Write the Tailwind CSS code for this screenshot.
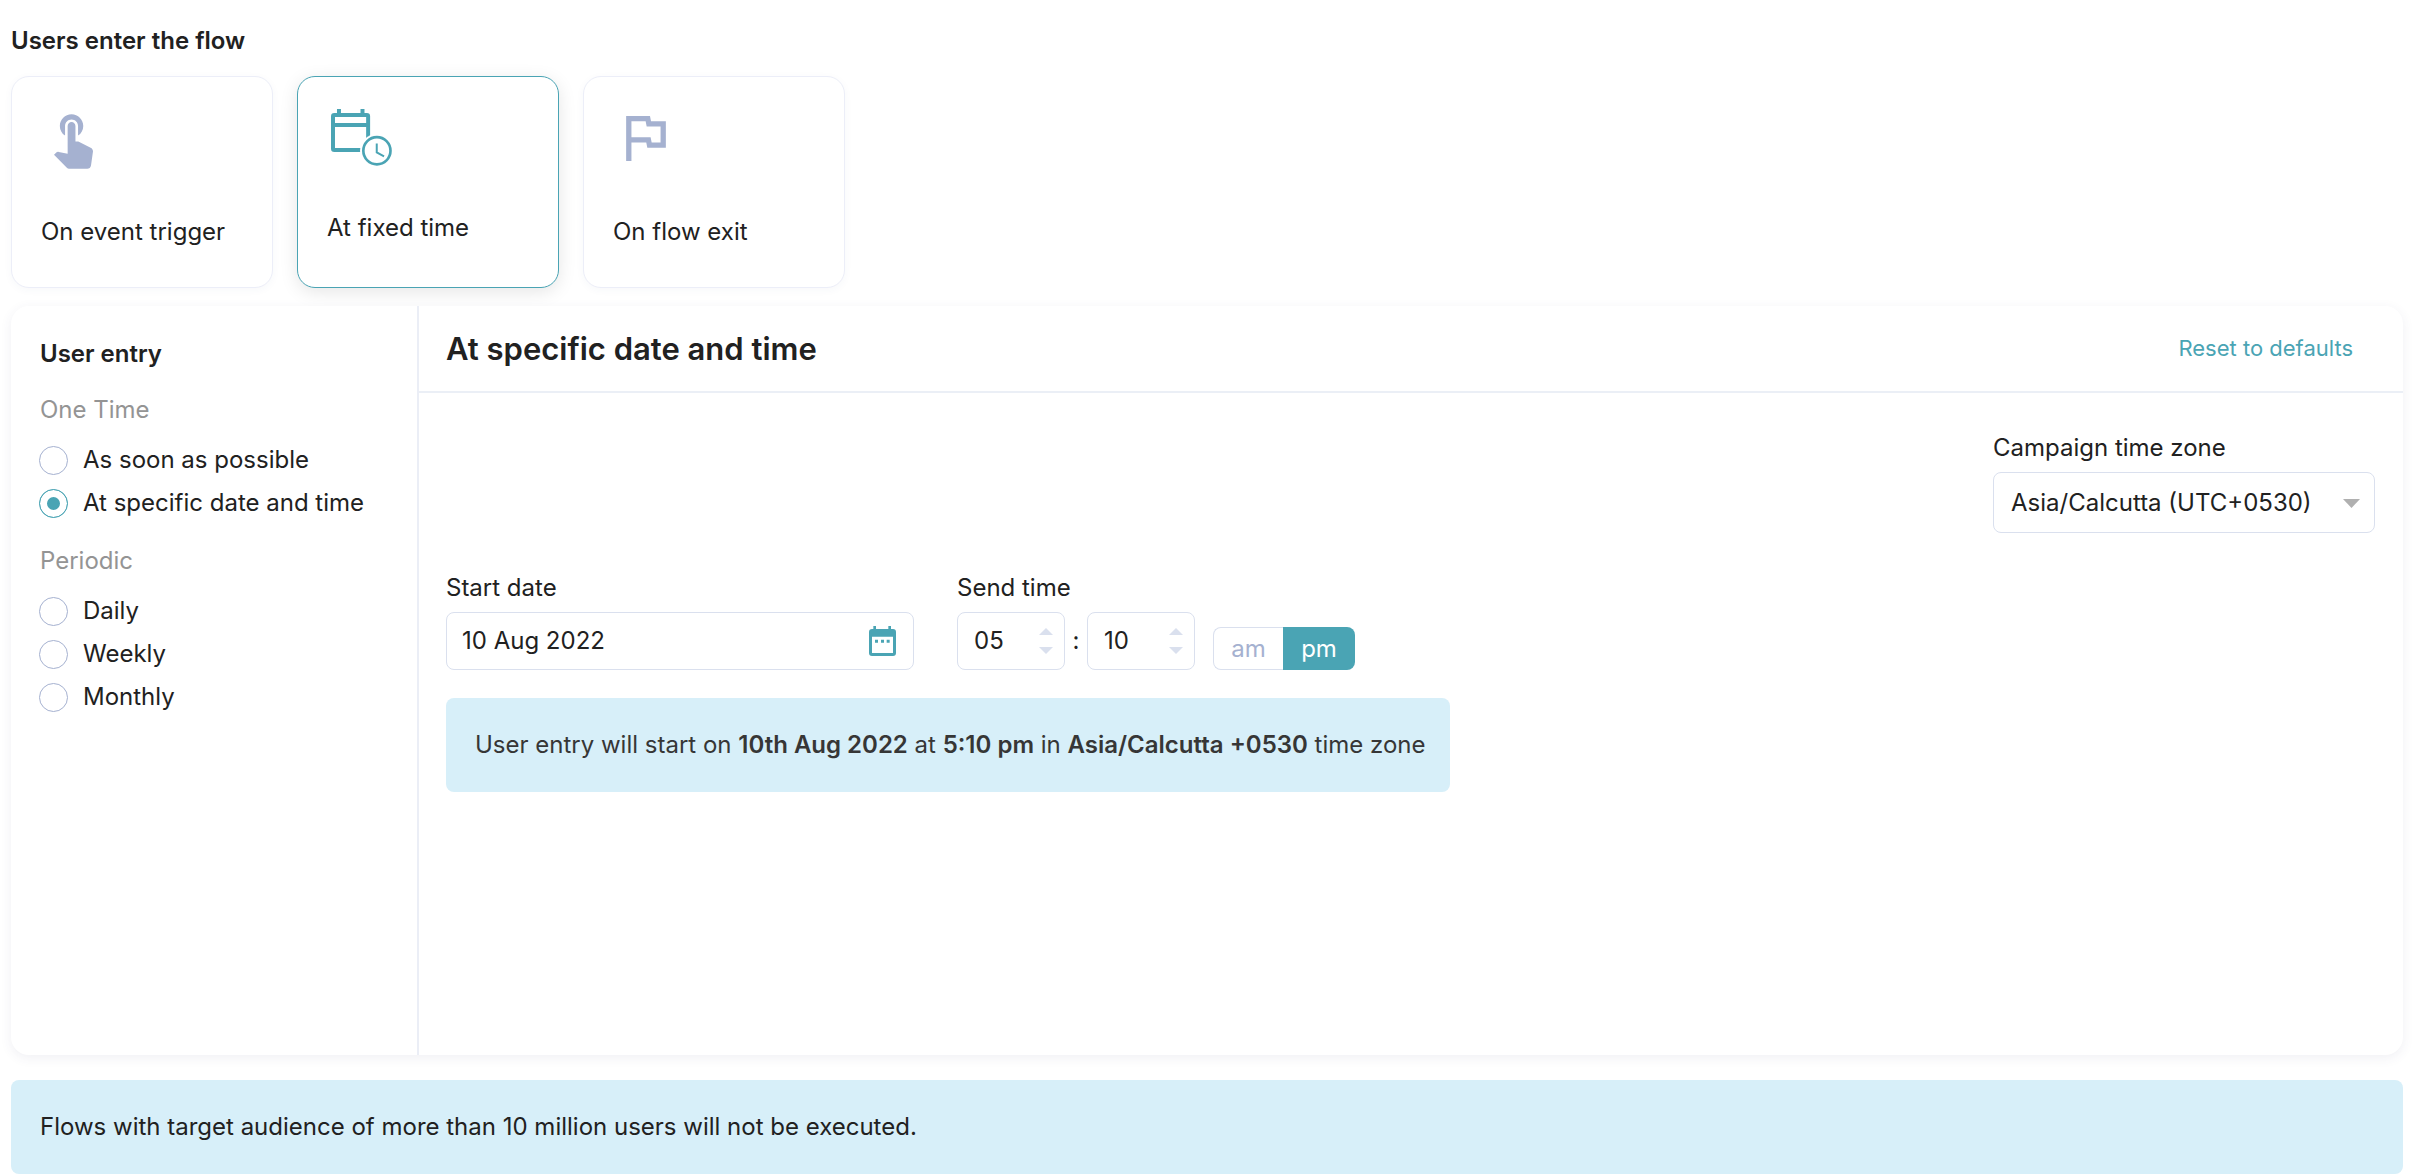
<!DOCTYPE html>
<html lang="en">
<head>
<meta charset="utf-8">
<meta name="viewport" content="width=device-width, initial-scale=1">
<title>Flow entry settings</title>
<script src="https://cdn.jsdelivr.net/npm/@tailwindcss/browser@4"></script>
</head>
<body class="bg-white font-['Inter',sans-serif] text-2xl text-[#212121]">
<main class="flex flex-col pl-[11px] pr-7 pt-[25px]">

  <h1 class="font-semibold">Users enter the flow</h1>

  <!-- Entry type -->
  <div class="mt-[19px] flex flex-wrap gap-6">
    <button type="button" class="flex h-[212px] w-[262px] flex-col justify-between rounded-[18px] border border-[#eceef8] bg-white pt-[37px] pb-[39px] pl-[29px] text-left shadow-[0_2px_8px_rgba(60,70,120,0.04)]">
      <svg class="ml-[13px] h-[55px] w-[39px]" viewBox="4.75 3 15 21" fill="#a5b1d0" aria-hidden="true"><path d="M9 11.24V7.5C9 6.12 10.12 5 11.5 5S14 6.12 14 7.5v3.74c1.21-.81 2-2.18 2-3.74C16 5.01 13.99 3 11.5 3S7 5.01 7 7.5c0 1.56.79 2.93 2 3.74zm9.84 4.63l-4.54-2.26c-.17-.07-.35-.11-.54-.11H13v-6c0-.83-.67-1.5-1.5-1.5S10 6.67 10 7.5v10.74l-3.43-.72c-.08-.01-.15-.03-.24-.03-.31 0-.59.13-.79.33l-.79.8 4.94 4.94c.27.27.65.44 1.06.44h6.79c.75 0 1.33-.55 1.44-1.28l.75-5.27c.01-.07.02-.14.02-.2 0-.62-.38-1.16-.91-1.38z"/></svg>
      <span>On event trigger</span>
    </button>
    <button type="button" aria-pressed="true" class="flex h-[212px] w-[262px] flex-col justify-between rounded-[18px] border border-[#4aa4b4] bg-white pt-8 pb-[43px] pl-[29px] text-left shadow-[0_4px_18px_rgba(0,0,0,0.10)]">
      <svg class="ml-1 h-[57px] w-[61px]" viewBox="993 327 184 172" fill="none" stroke="#4aa4b4" aria-hidden="true">
        <path fill="#4aa4b4" stroke="none" d="M1011 327h12v14h-12zM1082 327h12v14h-12z"/>
        <rect x="999" y="345" width="106" height="106" rx="4" stroke-width="12"/>
        <path d="M999 375.500h106" stroke-width="12"/>
        <circle cx="1131.500" cy="453" r="51" fill="#fff" stroke="none"/>
        <circle cx="1131.500" cy="453" r="41" stroke-width="8"/>
        <path d="M1131 431v27l22 12" stroke-width="6"/>
      </svg>
      <span>At fixed time</span>
    </button>
    <button type="button" class="flex h-[212px] w-[262px] flex-col justify-between rounded-[18px] border border-[#eceef8] bg-white pt-[39px] pb-[39px] pl-[29px] text-left shadow-[0_2px_8px_rgba(60,70,120,0.04)]">
      <svg class="ml-[13px] h-[45px] w-10" viewBox="5 4 15 17" fill="#a5b1d0" aria-hidden="true"><path d="M12.360 6l.4 2H18v6h-3.360l-.4-2H7V6h5.360M14 4H5v17h2v-7h5.600l.4 2h7V6h-5.600L14 4z"/></svg>
      <span>On flow exit</span>
    </button>
  </div>

  <!-- Schedule panel -->
  <section class="mt-[18px] flex min-h-[749px] rounded-[18px] bg-white shadow-[0_3px_12px_rgba(60,70,120,0.08)]">
    <aside class="w-[408px] shrink-0 border-r-2 border-[#ebeef6] pt-8 pl-7">
      <h2 class="pl-px font-semibold">User entry</h2>
      <fieldset class="mt-6">
        <legend class="pl-px text-[#949494]">One Time</legend>
        <div class="mt-4 flex flex-col gap-[7px]">
          <label class="flex h-9 items-center gap-[15px]"><input type="radio" name="entry" class="size-[29px] appearance-none rounded-full border border-[#a5b1d0]">As soon as possible</label>
          <label class="flex h-9 items-center gap-[15px]"><input type="radio" name="entry" checked class="size-[29px] appearance-none rounded-full border border-[#4aa4b4] bg-[#4aa4b4] shadow-[inset_0_0_0_7px_#fff]">At specific date and time</label>
        </div>
      </fieldset>
      <fieldset class="mt-6">
        <legend class="pl-px text-[#949494]">Periodic</legend>
        <div class="mt-4 flex flex-col gap-[7px]">
          <label class="flex h-9 items-center gap-[15px]"><input type="radio" name="entry" class="size-[29px] appearance-none rounded-full border border-[#a5b1d0]">Daily</label>
          <label class="flex h-9 items-center gap-[15px]"><input type="radio" name="entry" class="size-[29px] appearance-none rounded-full border border-[#a5b1d0]">Weekly</label>
          <label class="flex h-9 items-center gap-[15px]"><input type="radio" name="entry" class="size-[29px] appearance-none rounded-full border border-[#a5b1d0]">Monthly</label>
        </div>
      </fieldset>
    </aside>

    <div class="flex min-w-0 flex-1 flex-col">
      <header class="flex h-[87px] items-center justify-between border-b-2 border-[#ebeff6] pr-[50px] pl-[27px]">
        <h2 class="text-[31px] font-semibold">At specific date and time</h2>
        <a href="#" class="text-[22px] text-[#4aa4b4]">Reset to defaults</a>
      </header>

      <div class="flex flex-col pt-[39px] pr-7 pl-[27px]">
        <div class="flex w-[382px] flex-col gap-2 self-end">
          <label for="zone">Campaign time zone</label>
          <div class="relative">
            <select id="zone" class="h-[61px] w-full appearance-none rounded-lg border border-[#dae0ee] bg-white pl-[17px]">
              <option>Asia/Calcutta (UTC+0530)</option>
            </select>
            <svg class="pointer-events-none absolute top-[27px] right-[15px] h-[9px] w-[17px]" viewBox="0 0 17 9" fill="#b0b0b0" aria-hidden="true"><path d="M0 0h17L8.500 9z"/></svg>
          </div>
        </div>

        <div class="mt-[39px] flex flex-wrap items-end gap-[43px]">
          <div class="flex w-[468px] flex-col gap-2">
            <label for="date">Start date</label>
            <div class="flex h-[58px] items-center rounded-lg border border-[#dae0ee] pr-[17px] pl-[15px]">
              <input id="date" type="text" value="10 Aug 2022" class="min-w-0 flex-1 bg-transparent outline-none">
              <button type="button" aria-label="Open calendar">
                <svg class="h-[30px] w-[27px]" viewBox="0 0 81 90" fill="#4aa4b4" aria-hidden="true"><path fill-rule="evenodd" d="M13 0h8v9h37V0h8v9h6a9 9 0 0 1 9 9v63a9 9 0 0 1-9 9H9a9 9 0 0 1-9-9V18a9 9 0 0 1 9-9h4zM9 32v49h63V32zM18 41h9v9h-9zM36 41h9v9h-9zM53 41h9v9h-9z"/></svg>
              </button>
            </div>
          </div>

          <fieldset>
            <legend class="mb-2">Send time</legend>
            <div class="flex items-end">
              <div class="flex h-[58px] w-[108px] items-center rounded-lg border border-[#dae0ee] pr-[11px] pl-4">
                <input type="text" value="05" aria-label="Hour" class="min-w-0 flex-1 bg-transparent outline-none">
                <div class="flex flex-col gap-3">
                  <button type="button" aria-label="Hour up"><svg class="h-[7px] w-[14px]" viewBox="0 0 14 7" fill="#dae0ee"><path d="M0 7L7 0l7 7z"/></svg></button>
                  <button type="button" aria-label="Hour down"><svg class="h-[7px] w-[14px]" viewBox="0 0 14 7" fill="#dae0ee"><path d="M0 0h14L7 7z"/></svg></button>
                </div>
              </div>
              <span class="w-[22px] self-center text-center">:</span>
              <div class="flex h-[58px] w-[108px] items-center rounded-lg border border-[#dae0ee] pr-[11px] pl-4">
                <input type="text" value="10" aria-label="Minute" class="min-w-0 flex-1 bg-transparent outline-none">
                <div class="flex flex-col gap-3">
                  <button type="button" aria-label="Minute up"><svg class="h-[7px] w-[14px]" viewBox="0 0 14 7" fill="#dae0ee"><path d="M0 7L7 0l7 7z"/></svg></button>
                  <button type="button" aria-label="Minute down"><svg class="h-[7px] w-[14px]" viewBox="0 0 14 7" fill="#dae0ee"><path d="M0 0h14L7 7z"/></svg></button>
                </div>
              </div>
              <div class="ml-[18px] flex h-[43px]">
                <button type="button" class="w-[70px] rounded-l-lg border border-r-0 border-[#dae0ee] text-[#a5b1d0]">am</button>
                <button type="button" aria-pressed="true" class="w-[72px] rounded-r-lg bg-[#4aa4b4] text-white">pm</button>
              </div>
            </div>
          </fieldset>
        </div>

        <p class="mt-7 flex min-h-[94px] w-[1004px] max-w-full items-center rounded-lg bg-[#d7eff9] pl-[29px] text-[#363636]"><span>User entry will start on <b class="font-semibold">10th Aug 2022</b> at <b class="font-semibold">5:10 pm</b> in <b class="font-semibold">Asia/Calcutta +0530</b> time zone</span></p>
      </div>
    </div>
  </section>

  <p class="mt-[25px] flex min-h-[94px] items-center rounded-lg bg-[#d7eff9] px-[29px]">Flows with target audience of more than 10 million users will not be executed.</p>
</main>
</body>
</html>
